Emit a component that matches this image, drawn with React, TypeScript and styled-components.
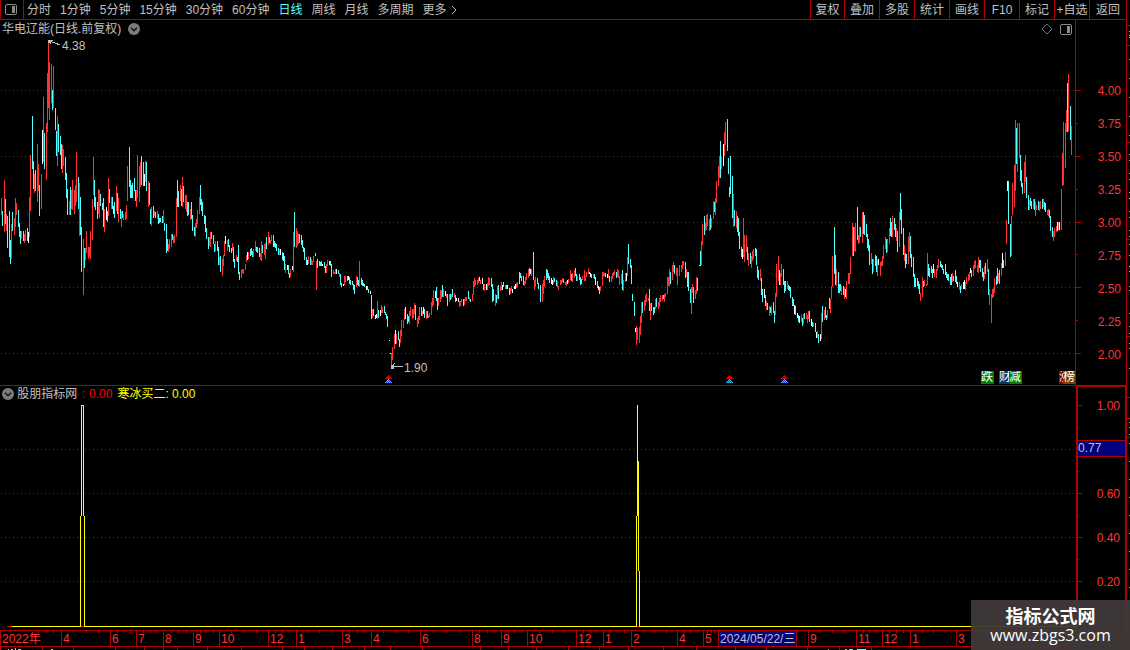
import React from "react";
import styled, { createGlobalStyle } from "styled-components";

const LINE = "#b00000";
const RED = "#ff3232";
const CYAN = "#54ffff";
const GREY = "#c0c0c0";
const YELLOW = "#ffff00";
const PLOT_W = 1075;

const Global = createGlobalStyle`
  * { box-sizing: border-box; }
  body {
    margin: 0;
    background: #000;
    color: ${GREY};
    font: 12px/16px "Liberation Sans", "Noto Sans CJK SC", sans-serif;
  }
`;

const Page = styled.div`
  position: relative;
  display: flex;
  overflow: hidden;
`;

const Main = styled.main`
  flex: 1;
  min-width: 0;
`;

const SideStrip = styled.aside`
  width: 4px;
  border-left: 1px solid ${LINE};
  overflow: hidden;
  svg { display: block; }
`;

const TopBar = styled.header`
  display: flex;
  height: 20px;
  border-bottom: 1px solid ${LINE};
`;

const PlainButton = styled.button`
  padding: 0;
  border: 0;
  background: none;
  color: inherit;
  font: inherit;
  line-height: 18px;
  white-space: nowrap;
  cursor: pointer;
`;

const PanelButton = styled(PlainButton)`
  width: 24px;
  border: solid ${LINE};
  border-width: 0 1px;
  svg { display: block; margin: 0 auto 0 4px; }
`;

const Periods = styled.nav`
  display: flex;
  gap: 9px;
  flex: 1;
  padding-left: 3px;
`;

const Period = styled(PlainButton)<{ $on?: boolean }>`
  color: ${(p) => (p.$on ? CYAN : GREY)};
  svg { margin-left: 4px; vertical-align: -1px; }
`;

const Tools = styled.div`
  display: flex;
`;

const Tool = styled(PlainButton)`
  width: 35px;
  border-left: 1px solid ${LINE};
  text-align: center;
  &:first-child { width: 34px; }
  &:last-child { width: 37px; }
`;

const Panel = styled.section`
  display: flex;
`;

const Plot = styled.div`
  position: relative;
  flex: 1;
  min-width: 0;
  border-bottom: 1px solid ${LINE};
`;

const PlotHead = styled.div<{ $h: number }>`
  display: flex;
  align-items: center;
  height: ${(p) => p.$h}px;
  padding-left: 2px;
  white-space: pre;
`;

const RoundButton = styled(PlainButton)`
  display: block;
  width: 12px;
  height: 12px;
  line-height: 0;
  svg { display: block; }
`;

const HeadActions = styled.div`
  display: flex;
  gap: 7px;
  margin-left: auto;
  padding-right: 3px;
`;

const IndicatorValue = styled.span<{ $color: string }>`
  margin-left: 5px;
  color: ${(p) => p.$color};
`;

const HeadToggle = styled.span`
  margin-left: 7px;
`;

const Canvas = styled.svg<{ $h: number }>`
  display: block;
  width: 100%;
  height: ${(p) => p.$h}px;
`;

const PriceMark = styled.span<{ $x: number; $y: number }>`
  position: absolute;
  left: ${(p) => (p.$x / PLOT_W) * 100}%;
  top: ${(p) => p.$y}px;
`;

const Badges = styled.div`
  position: absolute;
  right: 0;
  bottom: 1px;
  display: flex;
`;

const Badge = styled.span<{ $bg: string; $w: number; $gap: number }>`
  width: ${(p) => p.$w}px;
  height: 13px;
  margin-left: ${(p) => p.$gap}px;
  overflow: hidden;
  background: ${(p) => p.$bg};
  color: #fff;
  line-height: 12px;
  white-space: nowrap;
`;

const PriceAxis = styled.div`
  width: 51px;
  border-left: 1px solid ${LINE};
  padding-top: 55px;
`;

const IndexAxis = styled.div`
  position: relative;
  width: 50px;
  margin-top: -1px;
  border: solid ${LINE};
  border-width: 2px 1px 0 2px;
  padding-top: 8px;
`;

const Scale = styled.div<{ $h: number }>`
  display: flex;
  flex-direction: column;
  height: ${(p) => p.$h}px;
`;

const Mark = styled.div<{ $tick: number }>`
  display: flex;
  flex: 1;
  align-items: center;
  justify-content: space-between;
  padding-right: 5px;
  color: ${RED};
  &::before {
    content: "";
    width: ${(p) => p.$tick}px;
    height: 1px;
    margin-bottom: 2px;
    background: ${LINE};
  }
`;

const CursorValue = styled.output`
  position: absolute;
  top: 53px;
  left: 0;
  right: 0;
  height: 17px;
  border: solid ${LINE};
  border-width: 1px 0;
  background: #000080;
  line-height: 14px;
`;

const TimeAxis = styled.div<{ $columns: string }>`
  display: grid;
  grid-template-columns: ${(p) => p.$columns};
  width: calc(100% - 51px);
  height: 16px;
  border-bottom: 1px solid ${LINE};
`;

const Month = styled.div<{ $on?: boolean }>`
  min-width: 0;
  border-left: 1px solid ${LINE};
  background: ${(p) => (p.$on ? "#000080" : "transparent")};
  color: ${(p) => (p.$on ? GREY : RED)};
  white-space: nowrap;
`;

const Ticks = styled.div<{ $from: number }>`
  display: flex;
  justify-content: space-evenly;
  height: 2px;
  padding-left: ${(p) => p.$from}px;
  span { width: 1px; background: ${LINE}; }
`;

const MonthName = styled.div`
  padding-left: 1px;
  line-height: 13px;
`;

const Watermark = styled.div`
  position: absolute;
  right: 0;
  bottom: 0;
  width: 159px;
  height: 50px;
  background: rgba(64, 57, 57, 0.95);
  color: #fff;
  text-align: center;
`;

const SiteName = styled.div`
  padding-top: 5px;
  font: bold 18px/20px "Noto Sans CJK SC", sans-serif;
`;

const SiteUrl = styled.div`
  font: 16px/20px "Open Sans", sans-serif;
`;

/* One entry per trading bar: column, r/c/w (up, down, flat), high-low in pixels */
const BARS = `
1r198-215 2c211-226 4r180-232 5c199-224 6r214-231 7c216-248 9c211-257 10c240-264 11r224-259 12c212-231 14r218-235 15r198-227 16r203-215 18c210-227 19c223-237 20c231-244 21r231-239 23c231-241 24r234-243 25r230-241 27c228-241 28w232-243 29r197-237
30r155-211 32c116-169 33c161-189 34r174-193 35c170-191 37r144-202 38r164-191 39c185-216 41r174-209 42w130-164 43r97-162 44c133-169 46r123-180 47r73-132 48r43-108 49r62-120 51r64-103 52c90-110 53r66-108 55c108-130 56c131-156 57r116-166 58c124-152
60c136-155 61c144-169 62r145-173 63r149-166 65c157-180 66c173-198 67c189-215 69r201-215 70c187-215 71r190-209 72r180-210 74r190-214 75r185-206 76r152-202 78c177-209 79r183-236 80c197-235 81c227-272 83r239-295 84c248-268 85r248-260 86r231-253 88r247-259 89r247-257
90r231-259 92r199-240 93r157-195 94c180-207 95c197-210 97c202-219 98r189-214 99r190-218 100c194-206 102c203-210 103c198-227 104r209-232 106w207-220 107c211-222 108r178-216 109c189-203 111r197-209 112c197-209 113w206-214 114c202-218 116r186-211 117c193-214 118r198-222
120c209-219 121r211-227 122c211-218 123r214-220 125r212-220 126r205-219 127r166-201 129c147-187 130c180-198 131c185-198 132c183-198 134c178-191 135c190-201 136r190-207 137r155-198 139r166-202 140r162-187 141c156-185 143c162-186 144w174-186 145r161-182 146c162-191 148r181-207 149c183-205
150c209-224 151r207-226 153c206-218 154r211-216 155c212-218 157r211-219 158c214-224 159c218-223 160c218-222 162c216-223 163r210-223 164c223-231 166c224-253 167c239-251 168r244-252 169r239-249 171r234-247 172c234-240 173r236-243 174r235-243 176r198-237 177c180-207 178c191-207
180r185-201 181c189-206 182r177-207 183c186-202 185r195-209 186r195-212 187c202-216 188c202-215 190r209-220 191c202-219 192c215-231 194c227-236 195r223-237 196r219-228 197r210-224 199r197-214 200c185-205 201c199-211 202c202-216 204c215-224 205c216-232 206c228-239 208c237-249 209r237-246
210r232-247 211c232-239 213c235-244 214c244-252 215r241-251 217c241-251 218c247-265 219r257-265 220c256-272 222r259-276 223r255-266 224r241-256 225w236-244 227r240-251 228c239-247 229c245-252 231c248-253 232r243-251 233c247-262 234c259-268 236r255-261 237c257-262 238c245-274 239c272-280
241r270-278 242r269-273 243r269-274 245r264-270 246r255-262 247w252-260 248r252-259 250c249-256 251c248-255 252c251-257 253r249-257 255r241-251 256c247-252 257c247-253 259c248-257 260r253-260 261r241-261 262c245-253 264r244-255 265r243-259 266c237-249 268r232-245 269c237-243
270r240-244 271r235-241 273c235-247 274c241-247 275c243-248 276c244-251 278c248-255 279r249-255 280w249-255 282c252-260 283w253-261 284c256-270 285r264-273 287w265-270 288c265-274 289c273-278 290r269-277 292w266-270 293r232-272 294c212-247 296r228-248 297r231-246 298r234-244 299c234-243
301c235-245 302c240-248 303c247-252 304c248-260 306c257-265 307w260-265 308r256-264 310c257-265 311r259-265 312r261-265 313r256-262 315c253-256 316r261-290 317c259-268 319c261-266 320c262-266 321c261-266 322w264-266 324c262-268 325c266-273 326r264-273 327r260-266 329w261-265
330c261-266 331c264-277 333r270-274 334r272-274 335r269-274 336w269-274 338c270-274 339r273-277 340c274-285 341c283-287 343w284-286 344r276-285 345r276-282 347c276-281 348w276-280 349c277-284 350c280-285 352c281-285 353c284-290 354c285-294 356r276-287 357c277-285 358c280-286 359r261-287
361c278-285 362c280-286 363c283-286 364c284-287 366w286-290 367c286-290 368c289-293 370w291-294 371c295-319 372r309-318 373c309-316 375w315-319 376w314-318 377r301-319 378c310-318 380w310-316 381r305-313 382r307-313 384c306-313 385c312-315 386c314-319 387c316-327 389w340-341
390w353-354 391r353-365 392r347-360 394r334-349 395w330-344 396r334-344 398c331-340 399c339-347 400r330-343 401r320-336 403r320-328 404r309-320 405w307-319 407c314-324 408c316-322 409r311-324 410r307-316 412r309-319 413r309-318 414r303-314 415c305-320 417r318-327 418r316-324 419r307-320
421c307-316 422r311-316 423w307-314 424c309-318 426r311-319 427c311-318 428r315-318 429r313-317 431r302-315 432r298-307 433r290-305 435w291-298 436c287-301 437c298-310 438r298-306 440r290-302 441r290-299 442c285-297 443r289-297 445w291-296 446r294-298 447c294-306 449r294-302
450c294-300 451r294-299 452c289-297 454r293-298 455c295-302 456w298-301 458w298-302 459r301-307 460r301-306 461r299-302 463c299-306 464r299-305 465r297-301 466r297-301 468c291-299 469r297-301 470c299-302 472r294-301 473r281-295 474r278-287 475r280-285 477r280-285 478r278-283 479w277-281
480r280-284 482w278-284 483c284-290 484r284-291 486w284-290 487r283-290 488r277-286 489r278-285 491c278-287 492c284-302 493c289-301 495r294-306 496c295-303 497r286-299 498c285-299 500r286-291 501r282-290 502w285-290 503c282-287 505r285-289 506c285-289 507w285-289 509c288-295
510r288-294 511r286-291 512w289-293 514w286-289 515w284-289 516r283-288 517r282-287 519c272-284 519r279-281 520c273-278 521c276-281 523c276-285 524r281-286 525r277-284 526r273-280 528r269-278 529c268-276 530w269-274 531r269-276 533c252-280 534r280-290 535r277-287 537c278-284 538c283-289
540c285-302 542r284-302 543r280-294 544r276-287 546c269-280 547c270-278 548c273-280 549c276-283 551w278-284 552w280-285 553r277-284 554c278-282 556c280-286 557r281-287 558r286-290 560r280-285 561r280-284 562r278-282 563c279-283 565r282-285 566r281-286 567w280-284 568r279-283
570r270-280 571c274-281 572r273-282 574r270-278 575c268-276 576c274-281 577r276-281 579c274-280 580c277-285 581c279-284 582r276-280 584r270-281 585r276-281 586r272-277 588r268-274 589w272-274 590w273-277 591c274-278 593r274-278 594c274-279 595w277-285 597c281-288 598w286-290 599c287-294
600r286-291 602r272-286 603r272-277 604r273-276 605c273-277 607w274-278 608r269-278 609c276-282 611r276-282 612r273-279 613r272-276 614r270-275 616c272-278 617r269-277 618r270-278 619r276-285 621r274-284 622c270-290 623r280-291 625r273-282 626w273-281 627r257-276 628c244-264
630c259-268 631c265-284 632c294-301 634c302-316 635w328-332 636r326-345 637r328-340 639r327-343 640r316-335 641r302-323 642c302-313 644r300-311 645r295-306 646r293-302 648r298-301 649c289-311 650r303-320 651c303-311 653c307-315 654c307-313 655r299-309 656c298-307 658r302-309 659r298-307
660r295-302 662r295-301 663c295-299 664r294-302 665r293-297 667r277-294 668r277-286 669r269-286 670c272-284 672r265-280 673r262-272 674c265-274 676r268-276 677r268-285 679r265-276 681r265-272 682r261-269 683r261-266 685c262-278 686r269-277 687c272-287 688c272-291
690c289-303 691r287-314 692r284-293 693c287-303 695r290-299 696r277-294 697c278-291 699w265-266 700c251-266 701r241-265 702r224-245 704c216-235 705r223-231 706r215-230 707r214-226 709r219-231 710c215-230 711r218-228 713r201-219 714c202-212 715r198-215 716r181-203 718r166-186 719r156-178
720c141-178 721r156-169 723w144-166 724r132-156 725r122-145 727c119-151 728c158-174 729c187-197 730c156-194 732c176-218 733r194-227 734c210-226 736r211-228 737c216-232 738c218-236 739c232-249 741c247-257 742w249-259 743r218-257 744r235-262 746r235-252 747c247-260 748r253-266
750c253-264 751r256-268 752r251-261 753r249-259 755c248-256 756c249-265 757c266-278 758c270-280 760r269-281 761c278-295 762c289-302 764w289-298 765c295-306 766r301-310 767c303-310 769r306-316 770c307-313 771r306-315 773c302-313 774c311-323 775r293-315 776r264-297 778r256-281 779w270-285
780r273-285 781r264-277 783c269-285 784c281-293 785c281-291 787r281-289 788c285-290 789c286-291 790c287-298 792c297-306 793c299-306 794w305-314 795c306-315 797w313-318 798c315-322 799w316-323 801r315-322 802c318-326 803r314-324 804c313-319 806r313-319 807r315-323 808r311-319 809c311-322
811w319-326 812c322-327 813r323-327 815c323-332 816w332-338 817r331-338 818c334-343 820w334-341 821r313-339 822c306-322 824r310-320 825c307-318 826c315-320 827r310-318 829c298-309 830r299-313 831r286-299 832r256-287 834c227-274 835c255-285 836r269-286 838c272-293 839c284-293
840c284-291 841r286-295 843c286-295 844r287-299 845w289-297 846r281-299 848r273-284 849r273-284 850r257-274 852r223-256 853c227-256 854r227-251 855r223-252 857c207-240 858r235-244 859r227-243 860c227-237 862r212-243 863c212-234 864c215-235 866c224-237 867c234-248 868c239-251 869c245-265
871r253-264 872c259-274 873r259-272 875c255-266 876c256-272 877r260-276 878w259-265 880r262-276 881r261-266 882r256-266 883r245-259 885r237-249 886c239-253 887r239-252 889r228-244 890c218-236 891c222-237 892r216-237 894c218-230 895c224-237 896r228-241 897c231-252 899r212-247
900c193-220 901c209-234 903c228-255 904r245-261 905c253-268 906c254-264 908r237-264 909r232-252 910c236-258 911c254-267 913c257-277 914c274-287 915c278-287 917c278-286 918c281-289 919c284-294 920r293-301 922r277-297 923c281-287 924r280-286 926r284-286 927r253-285 928c264-276 929c268-277
931c266-273 932c269-278 933w264-273 934r269-277 936r269-278 937r265-271 938r259-268 940c261-267 941c264-268 942c265-270 943c269-274 945c264-275 946c272-278 947c274-280 948c274-281 950c277-285 951c274-285 952r273-282 953c276-281 955c270-282 956c276-284 957w282-287 959r282-290
960c286-293 961r284-289 963w282-289 964w280-289 965r282-290 966r277-284 968r274-281 969r272-280 970w268-273 971c270-277 973r265-276 974r261-269 975r260-268 977r265-272 978r257-273 979c260-268 980c260-272 982c268-277 983c272-281 984r266-279 985c263-274 987r259-272 988c269-295 989r289-305
991r294-323 992r289-298 993r288-297 994r278-293 996c276-285 997c268-284 998r273-282 999c270-284 1001r263-276 1002w253-268 1003c260-268 1005r252-266 1006r220-244 1007w181-191 1008c181-224 1010c224-257 1011r216-256 1012r183-215 1014r165-207 1015r120-191 1016c128-164 1017r123-172 1019r123-158
1020c155-181 1021c170-187 1022c183-194 1024r162-193 1025r155-182 1026c177-198 1028c195-210 1029r200-210 1030c198-206 1031c201-209 1033r199-209 1034c199-210 1035r202-216 1036r205-210 1038c201-210 1039r202-211 1040r201-209 1042c199-209 1043r199-207 1044c202-210 1045c203-212 1047r210-215 1048r209-216 1049c210-218
1050c216-231 1052c227-237 1053r231-241 1054r228-237 1056r226-232 1057w222-231 1058r222-230 1059w222-230 1061r189-230 1062r153-186 1063r122-185 1065r123-168 1066r110-132 1067c83-132 1068r74-131 1070c106-140 1071r126-155`;

const paths: Record<string, string> = { r: "", c: "", w: "" };
for (const m of BARS.matchAll(/(\d+)([rcw])(\d+)-(\d+)/g)) {
  paths[m[2]] += `M${m[1]} ${m[3]}h1V${m[4]}h-1z`;
}

const Grid = ({ rows }: { rows: number[] }) => (
  <>
    {rows.map((y) => (
      <line key={y} x1="1" x2={PLOT_W} y1={y + 0.5} y2={y + 0.5} stroke="#9c1010" strokeDasharray="1 3" />
    ))}
  </>
);

/* Stacked red and blue arrow heads under a bar */
const Signal = ({ x }: { x: number }) => (
  <g>
    {[0, 1, 2, 3].map((r) => (
      <g key={r}>
        <rect x={x - r} y={375 + r} width={2 * r + 1} height="1" fill="#d00000" />
        <rect x={x - r} y={379 + r} width={2 * r + 1} height="1" fill="#0040ff" />
        {Array.from({ length: r + 1 }, (_, i) => (
          <rect key={i} x={x - r + 2 * i} y={379 + r} width="1" height="1" fill="#40c8ff" />
        ))}
      </g>
    ))}
  </g>
);

const PanelIcon = ({ color = "#8a8a8a" }: { color?: string }) => (
  <svg width="12" height="11" viewBox="0 0 12 11">
    <rect x="0.5" y="0.5" width="11" height="10" rx="1.5" fill="none" stroke={color} />
    <rect x="7" y="2" width="3" height="7" fill={color} />
  </svg>
);

const ChevronDisc = () => (
  <svg width="12" height="12" viewBox="0 0 12 12">
    <circle cx="6" cy="6" r="6" fill="#7c7c7c" />
    <path d="M3 4.8 6 7.6 9 4.8" fill="none" stroke="#161616" strokeWidth="1.5" />
  </svg>
);

const PERIODS = ["分时", "1分钟", "5分钟", "15分钟", "30分钟", "60分钟", "日线", "周线", "月线", "多周期"];
const TOOLS = ["复权", "叠加", "多股", "统计", "画线", "F10", "标记", "+自选", "返回"];
const PRICES = ["4.00", "3.75", "3.50", "3.25", "3.00", "2.75", "2.50", "2.25", "2.00"];
const LEVELS = ["1.00", "", "", "", "0.60", "", "0.40", "", "0.20"];
const MONTHS: { w: number; name?: string; from?: number; on?: boolean }[] = [
  { w: 61, name: "2022年", from: 30 },
  { w: 49, name: "4" },
  { w: 26, name: "6" },
  { w: 27, name: "7" },
  { w: 30, name: "8" },
  { w: 26, name: "9" },
  { w: 49, name: "10" },
  { w: 28, name: "12" },
  { w: 46, name: "1" },
  { w: 29, name: "3" },
  { w: 49, name: "4" },
  { w: 52, name: "6" },
  { w: 29, name: "8" },
  { w: 26, name: "9" },
  { w: 49, name: "10" },
  { w: 27, name: "12" },
  { w: 28, name: "1" },
  { w: 46, name: "2" },
  { w: 26, name: "4" },
  { w: 15, name: "5" },
  { w: 78, name: "2024/05/22/三", on: true },
  { w: 12 },
  { w: 48, name: "9" },
  { w: 26, name: "11" },
  { w: 28, name: "12" },
  { w: 46, name: "1" },
  { w: 119, name: "3", from: 2 },
];
const MONTH_COLUMNS = MONTHS.map((m) => `minmax(0, ${m.w}fr)`).join(" ");
const FOOT_LINES = [0, 42, 73, 115, 144, 163, 177, 207, 241, 282, 304, 332, 364, 390, 422, 480, 508, 536, 568, 599, 628, 663, 696, 735, 766, 807, 839, 871];
const STRIP_RED = [25, 45, 142, 239, 336, 397, 418, 437];
const STRIP_GREY = [31, 35, 37, 59, 78, 97, 116, 135, 154, 160, 173, 179, 192, 198, 211, 217, 230, 236, 244, 255, 266, 271, 286, 290, 313, 326, 333, 343, 348, 368, 422, 427, 434, 443, 461, 479, 497, 515, 533, 551, 569, 587];

export default function App() {
  return (
    <Page>
      <Global />
      <Main>
        <TopBar>
          <PanelButton aria-label="侧栏">
            <PanelIcon />
          </PanelButton>
          <Periods>
            {PERIODS.map((p) => (
              <Period key={p} $on={p === "日线"}>{p}</Period>
            ))}
            <Period>
              更多
              <svg width="6" height="10" viewBox="0 0 6 10">
                <path d="M1 1 5 5 1 9" fill="none" stroke={GREY} />
              </svg>
            </Period>
          </Periods>
          <Tools>
            {TOOLS.map((t) => (
              <Tool key={t}>{t}</Tool>
            ))}
          </Tools>
        </TopBar>

        <Panel>
          <Plot>
            <PlotHead $h={18}>
              <span>华电辽能(日线.前复权)</span>
              <HeadToggle>
                <RoundButton aria-label="展开">
                  <ChevronDisc />
                </RoundButton>
              </HeadToggle>
              <HeadActions>
                <RoundButton aria-label="标记点">
                  <svg width="12" height="12" viewBox="0 0 12 12">
                    <path d="M6 1 11 6 6 11 1 6z" fill="none" stroke="#707070" />
                  </svg>
                </RoundButton>
                <RoundButton aria-label="面板">
                  <PanelIcon />
                </RoundButton>
              </HeadActions>
            </PlotHead>
            <Canvas $h={347} viewBox="0 38 1075 347" preserveAspectRatio="none" shapeRendering="crispEdges">
              <Grid rows={[90, 156, 222, 287, 353]} />
              <path d={paths.r} fill={RED} />
              <path d={paths.c} fill={CYAN} />
              <path d={paths.w} fill="#fff" />
              <path d="M48.5 43v-3h4M49 40.5l3 1.5 3 1 5 2M49 41l2 3" fill="none" stroke={GREY} />
              <path d="M391 366.5h12M391.5 366.5l3-3M391.5 366.5l3 3M391 365h2v3h-2z" fill="none" stroke={GREY} />
              <Signal x={388} />
              <Signal x={729} />
              <Signal x={784} />
            </Canvas>
            <PriceMark $x={62} $y={18}>4.38</PriceMark>
            <PriceMark $x={404} $y={340}>1.90</PriceMark>
            <Badges>
              <Badge $bg="#008000" $w={13} $gap={0}>跌</Badge>
              <Badge $bg="#003a70" $w={10} $gap={5}>财</Badge>
              <Badge $bg="#008000" $w={13} $gap={0}>减</Badge>
              <Badge $bg="#800000" $w={4} $gap={37}>涨</Badge>
              <Badge $bg="#804000" $w={12} $gap={0}>榜</Badge>
            </Badges>
          </Plot>
          <PriceAxis>
            <Scale $h={296}>
              {PRICES.map((p, i) => (
                <Mark key={p} $tick={i % 2 ? 2 : 5}>{p}</Mark>
              ))}
            </Scale>
          </PriceAxis>
        </Panel>

        <Panel>
          <Plot>
            <PlotHead $h={16}>
              <RoundButton aria-label="展开指标">
                <ChevronDisc />
              </RoundButton>
              <span> 股朋指标网</span>
              <IndicatorValue $color="#ff0000">: 0.00</IndicatorValue>
              <IndicatorValue $color={YELLOW}>寒冰买二: 0.00</IndicatorValue>
            </PlotHead>
            <Canvas $h={228} viewBox="0 402 1076 228" preserveAspectRatio="none" shapeRendering="crispEdges">
              <Grid rows={[449, 493, 537, 581]} />
              <path d="M7 626h1068v1H7z" fill="#ff0000" />
              <path
                d="M12 626h69v1h-69zM80 516h1v110h-1zM81 405h1v111h-1zM81 405h3v1h-3zM83 405h1v111h-1zM84 516h1v110h-1zM84 626h553v1h-553zM636 516h1v110h-1zM637 405h1v111h-1zM638 461h1v110h-1zM639 571h1v55h-1zM639 626h437v1h-437z"
                fill={YELLOW}
              />
            </Canvas>
          </Plot>
          <IndexAxis>
            <Scale $h={198}>
              {LEVELS.map((v, i) => (
                <Mark key={i} $tick={i % 2 ? 1 : 4}>{v}</Mark>
              ))}
            </Scale>
            <CursorValue>0.77</CursorValue>
          </IndexAxis>
        </Panel>

        <TimeAxis $columns={MONTH_COLUMNS}>
          {MONTHS.map((m, i) => (
            <Month key={i} $on={m.on}>
              <Ticks $from={m.from ?? 0}>
                {!m.on && m.w > 12 && [0, 1, 2].map((t) => <span key={t} />)}
              </Ticks>
              <MonthName>{m.name}</MonthName>
            </Month>
          ))}
        </TimeAxis>
        <Canvas $h={3} viewBox="0 647 1126 3" preserveAspectRatio="none" shapeRendering="crispEdges">
          {FOOT_LINES.map((x) => (
            <rect key={x} x={x} y="647" width="1" height="3" fill={LINE} />
          ))}
          <path d="M8 649h1v1h-1zM11 649h2v1h-2zM15 648h1v2h-1zM18 649h3v1h-3zM51 649h2v1h-2zM828 649h1v1h-1zM845 649h2v1h-2z" fill={GREY} />
          <path d="M849 649h4v1h-4zM857 649h9v1h-9z" fill={CYAN} />
        </Canvas>
      </Main>

      <SideStrip>
        <svg width="3" height="650" viewBox="0 0 3 650" shapeRendering="crispEdges">
          {STRIP_RED.map((y) => (
            <rect key={y} x="0" y={y} width="3" height="1" fill={LINE} />
          ))}
          {STRIP_GREY.map((y) => (
            <rect key={y} x="2" y={y} width="1" height="1" fill={GREY} />
          ))}
        </svg>
      </SideStrip>

      <Watermark>
        <SiteName>指标公式网</SiteName>
        <SiteUrl>www.zbgs3.com</SiteUrl>
      </Watermark>
    </Page>
  );
}
